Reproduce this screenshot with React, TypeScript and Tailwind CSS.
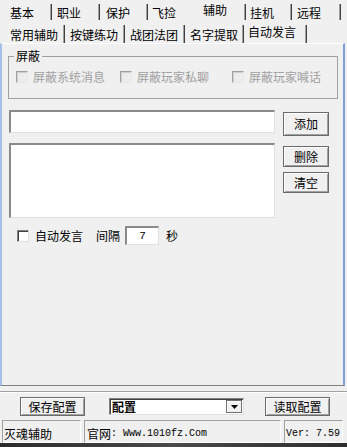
import React from "react";

type Tab = { label: string; w: number; pl: number; sep: boolean; active?: boolean };

const topTabs: Tab[] = [
  { label: "基本", w: 50, pl: 8, sep: true },
  { label: "职业", w: 48, pl: 5, sep: true },
  { label: "保护", w: 48, pl: 6, sep: true },
  { label: "飞捡", w: 48, pl: 4, sep: false },
  { label: "辅助", w: 50, pl: 7, sep: true, active: true },
  { label: "挂机", w: 46, pl: 4, sep: true },
  { label: "远程", w: 49, pl: 5, sep: true },
];

const subTabs: Tab[] = [
  { label: "常用辅助", w: 63, pl: 8, sep: true },
  { label: "按键练功", w: 60, pl: 5, sep: true },
  { label: "战团法团", w: 60, pl: 5, sep: true },
  { label: "名字提取", w: 59, pl: 5, sep: true },
  { label: "自动发言", w: 63, pl: 4, sep: true, active: true },
];

const TabRow: React.FC<{ tabs: Tab[]; height: string; sepTop: string; sepH: string }> = ({
  tabs,
  height,
  sepTop,
  sepH,
}) => (
  <div className={`flex pl-[2px] ${height}`}>
    {tabs.map((t) => (
      <div key={t.label} className="flex justify-between shrink-0" style={{ width: t.w }}>
        <span
          className={`leading-[12px] ${t.active ? "pt-[4px]" : "pt-[7px]"}`}
          style={{ paddingLeft: t.pl }}
        >
          {t.label}
        </span>
        {t.sep && (
          <span
            className={`w-[2px] border-l border-l-[#a0a0a0] border-r border-r-[#404040] ${sepTop} ${sepH}`}
          />
        )}
      </div>
    ))}
  </div>
);

const Button: React.FC<{ label: string; className?: string }> = ({ label, className }) => (
  <div
    className={`flex items-center justify-center border border-[#6a6a6a] bg-[#f0f0f0] shadow-[inset_1px_1px_0_#ffffff,inset_-1px_-1px_0_#a0a0a0] leading-[12px] ${className ?? ""}`}
  >
    {label}
  </div>
);

const sunken =
  "border-t-2 border-l-2 border-t-[#8a8a8a] border-l-[#8a8a8a] border-b border-r border-b-[#e0e0e0] border-r-[#e0e0e0] bg-white";

const DisabledCheck: React.FC<{ label: string; w: number }> = ({ label, w }) => (
  <div className="flex items-center shrink-0" style={{ width: w }}>
    <span className="w-[12px] h-[12px] border border-t-[#a0a0a0] border-l-[#a0a0a0] border-b-[#e8e8e8] border-r-[#e8e8e8] bg-[#ececec] shadow-[inset_1px_1px_0_#cfcfcf]" />
    <span className="ml-[5px] text-[#a0a0a0] leading-[12px]">{label}</span>
  </div>
);

export default function App() {
  return (
    <div className="w-[347px] h-[447px] bg-[#f0f0f0] flex flex-col text-[12px] text-black font-['Noto_Sans_CJK_SC','Liberation_Sans',sans-serif] overflow-hidden">
      {/* Tabs + panel */}
      <div className="h-[386px] flex flex-col">
        <TabRow tabs={topTabs} height="h-[22px]" sepTop="mt-[4px]" sepH="h-[16px]" />
        <TabRow tabs={subTabs} height="h-[21px]" sepTop="mt-[3px]" sepH="h-[18px]" />

        <div className="flex-1 flex flex-col mr-[2px] border-l-2 border-l-[#a6c0ea] border-r-2 border-r-[#7f9fd6] border-t border-t-white border-b border-b-[#808080]">
          {/* 屏蔽 group */}
          <fieldset className="ml-[6px] mt-[6px] w-[322px] border border-[#a0a0a0] px-[5px] pb-[6px]">
            <legend className="px-[2px] leading-[12px]">屏蔽</legend>
            <div className="flex items-center h-[30px] pl-[2px]">
              <DisabledCheck label="屏蔽系统消息" w={104} />
              <DisabledCheck label="屏蔽玩家私聊" w={112} />
              <DisabledCheck label="屏蔽玩家喊话" w={100} />
            </div>
          </fieldset>

          {/* message input */}
          <div className="flex mt-[11px] ml-[7px]">
            <div className={`w-[266px] h-[23px] ${sunken}`} />
            <Button label="添加" className="ml-[8px] mt-[2px] w-[46px] h-[24px]" />
          </div>

          {/* message list */}
          <div className="flex mt-[7px] ml-[7px]">
            <div className={`w-[266px] h-[75px] ${sunken}`} />
            <div className="ml-[8px] mt-[3px] flex flex-col gap-[5px]">
              <Button label="删除" className="w-[46px] h-[21px]" />
              <Button label="清空" className="w-[46px] h-[21px]" />
            </div>
          </div>

          {/* auto speak */}
          <div className="flex items-center mt-[8px] ml-[15px] h-[19px]">
            <span className="w-[12px] h-[12px] border border-t-[#808080] border-l-[#808080] border-b-[#e0e0e0] border-r-[#e0e0e0] bg-white shadow-[inset_1px_1px_0_#404040]" />
            <span className="ml-[6px] leading-[12px]">自动发言</span>
            <span className="ml-[13px] leading-[12px]">间隔</span>
            <div className={`ml-[5px] w-[34px] h-[19px] flex items-center justify-center font-['Liberation_Mono',monospace] text-[11px] ${sunken}`}>
              7
            </div>
            <span className="ml-[7px] leading-[12px]">秒</span>
          </div>
        </div>
      </div>

      {/* separator */}
      <div className="mt-[5px] h-[2px] border-t border-t-[#a0a0a0] border-b border-b-white" />

      {/* config row */}
      <div className="mt-[4px] h-[19px] flex items-center">
        <Button label="保存配置" className="ml-[20px] w-[65px] h-[19px]" />
        <div className="ml-[24px] w-[135px] h-[17px] flex items-center justify-between border border-t-[#808080] border-l-[#808080] border-b-[#e0e0e0] border-r-[#e0e0e0] bg-white shadow-[inset_1px_1px_0_#404040]">
          <span className="pl-[2px] leading-[12px] font-semibold">配置</span>
          <span className="mr-[1px] w-[16px] h-[13px] flex items-center justify-center border border-[#707070] bg-[#f0f0f0] shadow-[inset_1px_1px_0_#ffffff]">
            <svg width="7" height="4" viewBox="0 0 7 4">
              <path d="M0 0H7L3.5 4Z" fill="#000" />
            </svg>
          </span>
        </div>
        <Button label="读取配置" className="ml-[21px] w-[65px] h-[19px]" />
      </div>

      {/* status bar */}
      <div className="mt-[4px] h-[23px] flex gap-[3px] pl-[2px] pr-[4px]">
        <div className="w-[79px] flex items-end pb-[2px] border border-t-[#a0a0a0] border-l-[#a0a0a0] border-b-white border-r-white">
          <span className="pl-[1px] leading-[12px]">灭魂辅助</span>
        </div>
        <div className="w-[197px] flex items-end pb-[2px] border border-t-[#a0a0a0] border-l-[#a0a0a0] border-b-white border-r-white">
          <span className="pl-[2px] leading-[12px]">官网</span>
          <span className="leading-[12px] font-['Liberation_Mono',monospace] text-[10px]">: Www.1010fz.Com</span>
        </div>
        <div className="flex-1 flex items-end pb-[2px] border border-t-[#a0a0a0] border-l-[#a0a0a0] border-b-white border-r-white">
          <span className="pl-[1px] leading-[12px] font-['Liberation_Mono',monospace] text-[10px]">Ver: 7.59</span>
        </div>
      </div>

      <div className="flex-1 bg-gradient-to-r from-[#2b2b2b] via-[#4a4a4a] to-[#2e2e2e]" />
    </div>
  );
}
